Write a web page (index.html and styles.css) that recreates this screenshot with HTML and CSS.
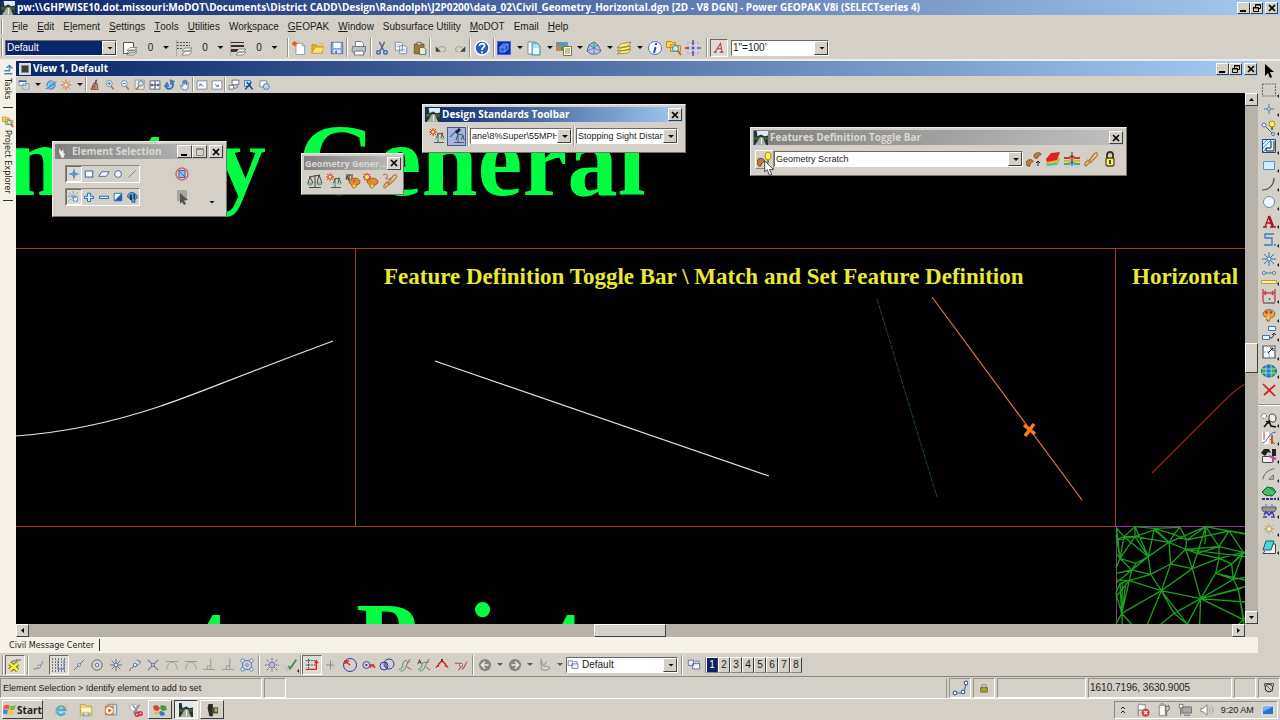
FILE: index.html
```html
<!DOCTYPE html>
<html lang="en">
<head>
<meta charset="utf-8">
<title>Power GEOPAK V8i</title>
<link rel="stylesheet" href="styles.css">
</head>
<body>
<svg class="defs" aria-hidden="true">
  <symbol id="photo" viewBox="0 0 16 16"><path fill="#24323a" d="M0 0h16v16H0z"/><path fill="#dce8f4" d="M3 0h13v5l-4 1-4-2-4 2z"/><path fill="#46602f" d="M0 7h16v3H0z"/><path fill="#a9aca4" d="M7 7h3l4 9H1z"/><path stroke="#fff" d="M8.500 8v7"/></symbol>
  <symbol id="min" viewBox="0 0 12 12"><path fill="#000" d="M2 8h6v2H2z"/></symbol>
  <symbol id="max" viewBox="0 0 12 12"><path fill="none" stroke="#8b8880" d="M2.500 2.500h7v7h-7zM2 3.500h8"/></symbol>
  <symbol id="restore" viewBox="0 0 12 12"><path fill="none" stroke="#000" d="M4.500 5V2.500h5v4H7.500M4 3h6M2.500 5.500h5v4h-5zM2 6h6"/></symbol>
  <symbol id="close" viewBox="0 0 12 12"><path stroke="#000" stroke-width="1.700" d="M3 3l6 6M9 3L3 9"/></symbol>
  <symbol id="level" viewBox="0 0 16 16"><path fill="#fff" stroke="#555" d="M1.500 2.500h10v11h-10z"/><path fill="#f4f4ef" stroke="#777" stroke-width=".8" d="M5 13l3-3h7l-3 3zM5 10.500l3-3h7l-3 3zM5 15l3-3h7l-3 3z"/></symbol>
  <symbol id="style" viewBox="0 0 16 16"><path stroke="#555" stroke-dasharray="2 1" d="M0 2.500h13M0 5.500h13M0 8.500h6"/><path fill="#f4f4ef" stroke="#777" stroke-width=".8" d="M5 11l3-3h7l-3 3zM5 15l3-4h7l-3 4z"/></symbol>
  <symbol id="weight" viewBox="0 0 16 16"><path fill="#3d3030" d="M0 2h13v1H0zM0 5h13v2H0zM0 9h8v3H0z"/><path fill="#f4f4ef" stroke="#777" stroke-width=".8" d="M5 12l3-3h7l-3 3zM5 15l3-3h7l-3 3z"/></symbol>
  <symbol id="new" viewBox="0 0 16 16"><path fill="#fff" stroke="#8490a8" d="M4.500 2.500h7l3 3v10h-10z"/><path fill="none" stroke="#8490a8" d="M11.500 2.500v3h3"/><path stroke="#e85a10" stroke-width="1.300" d="M3 0v6M0 3h6M1 1l4 4M5 1L1 5"/></symbol>
  <symbol id="open" viewBox="0 0 16 16"><path fill="#e6ab25" stroke="#b98316" stroke-width=".7" d="M1 4h5l1 2h6v8H1z"/><path fill="#ffe36b" stroke="#c8962a" stroke-width=".7" d="M1 14L5 7h10l-3 7zM9 3h4l1 3"/></symbol>
  <symbol id="save" viewBox="0 0 16 16"><path fill="#8ea5d8" stroke="#5366a3" d="M1.500 1.500h13v13h-13z"/><path fill="#fff" d="M4 2h8v6H4z"/><path fill="#e2e5ef" d="M4 10h8v4H4z"/><path fill="#546699" d="M6 11h2v3H6z"/></symbol>
  <symbol id="print" viewBox="0 0 16 16"><path fill="#fff" stroke="#77818c" d="M4.500 7V1.500h6l2 2V7"/><path fill="#bac0c8" stroke="#717a86" d="M1.500 6.500h13v5l-3 2H4l-3-2z"/><path fill="#fff" stroke="#777" d="M4 11h8l1 4H3z"/></symbol>
  <symbol id="cut" viewBox="0 0 16 16"><path fill="none" stroke="#56667c" stroke-width="1.500" d="M5 1l5 10M11 1L6 11"/><g fill="none" stroke="#315bb5" stroke-width="1.600"><circle cx="4" cy="13" r="2"/><circle cx="12" cy="13" r="2"/></g></symbol>
  <symbol id="copy" viewBox="0 0 16 16"><path fill="#fff" stroke="#70809b" d="M1.500 1.500h6l2 2v7h-8zM6.500 5.500h6l2 2v7h-8z"/><path stroke="#9aa6bd" d="M3 4.500h4M3 6.500h3M8 9.500h5M8 11.500h5"/></symbol>
  <symbol id="paste" viewBox="0 0 16 16"><path fill="#a17b37" stroke="#685020" d="M1.500 3.500h11v11h-11z"/><path fill="#d5d5d5" stroke="#666" d="M4.500 1.500h5v3h-5z"/><path fill="#e9efd7" stroke="#53654b" d="M7.500 7.500h5l2 2v6h-7z"/></symbol>
  <symbol id="undo" viewBox="0 0 16 16"><path fill="none" stroke="#aaa79f" stroke-width="1.500" d="M4 9c4-5 10-3 10 1 0 2-2 3-4 3"/><path fill="#44423e" d="M1 6v7h7z"/></symbol>
  <symbol id="redo" viewBox="0 0 16 16"><path fill="none" stroke="#aaa79f" stroke-width="1.500" d="M12 9C8 4 2 6 2 10c0 2 2 3 4 3"/><path fill="#44423e" d="M15 6v7H8z"/></symbol>
  <symbol id="help" viewBox="0 0 16 16"><circle cx="8" cy="8" r="7" fill="#2e5cb8" stroke="#fff" stroke-width="1.500"/><path fill="none" stroke="#fff" stroke-width="1.800" d="M5.500 6c0-3.500 5.500-3 5 0-.3 1.500-2.500 1.500-2.500 4M8 11.500v1.800"/></symbol>
  <symbol id="cube" viewBox="0 0 16 16"><path fill="#0b2fb0" stroke="#3c6ad8" d="M1.500 1.500h13v13h-13z"/><path fill="#2a62e0" stroke="#8ab2ff" stroke-width=".8" d="M4 7h5v5H4zM4 7l3-3h5L9 7M12 4v5l-3 3"/></symbol>
  <symbol id="doc" viewBox="0 0 16 16"><path fill="#fff" stroke="#54789a" stroke-width=".8" d="M2 2h7l2 2v10H2z"/><path fill="#a5e4ea" stroke="#3c6f8b" stroke-width=".8" d="M6 3h5l3 3v9H6z"/><path fill="#eefcff" d="M7 8h6v6H7z"/></symbol>
  <symbol id="image" viewBox="0 0 16 16"><path fill="#fff" stroke="#666" stroke-width=".7" d="M.5 2.500h11v8H.5z"/><path fill="#3fa0d8" d="M1 3h10v4H1z"/><path fill="#e07925" d="M1 6h5v4H1z"/><path fill="#3d9a47" d="M5 7h6v3H5z"/><path fill="#fffce0" stroke="#777c3d" d="M7.500 6.500h8v9h-8z"/><path stroke="#8c8c60" d="M9 9h5M9 11h5M9 13h5"/></symbol>
  <symbol id="mesh" viewBox="0 0 16 16"><path fill="#b9c5ef" stroke="#626b88" d="M1 11l2-6 5-3 4 3 3 6-4 3H5z"/><path fill="#72d5c3" d="M8 3l3 3-4 2-3-2z"/><path fill="none" stroke="#5a6389" stroke-width=".7" d="M3 5l5 3 4-3M1 11l7-3 7 3M8 8v6M8 2v6"/></symbol>
  <symbol id="layers" viewBox="0 0 16 16"><g fill="#fff07c" stroke="#87803b" stroke-width=".8"><path d="M1 14l4-3 10-2-3 4zM1 11l4-3 10-2-3 4zM1 8l4-4 10-2-3 4z"/></g></symbol>
  <symbol id="info" viewBox="0 0 16 16"><circle cx="8" cy="8" r="6.500" fill="#fff" stroke="#4c6fcb"/><path stroke="#2650bd" stroke-width="2" d="M9 3v2M8.500 7L7 13"/></symbol>
  <symbol id="find" viewBox="0 0 16 16"><path fill="#ffcf55" stroke="#c38e20" d="M.5 1.500h5l1 1h3v5h-9zM4.500 4.500h4l1 1h5v6h-10z"/><circle cx="9.500" cy="8.500" r="3" fill="#b9ecff" stroke="#3e78ab"/><path stroke="#dd5630" stroke-width="2" d="M12 11l3 4"/></symbol>
  <symbol id="grid" viewBox="0 0 16 16"><path fill="#bcb0e0" d="M2 2h12v12H2z"/><path stroke="#fff" stroke-width=".6" d="M5 2v12M11 2v12M2 5h12M2 11h12"/><path stroke="#222" d="M8 0v5M8 11v5"/><path stroke="#d32222" stroke-width="1.500" d="M0 8h4"/><path stroke="#2d9a3a" stroke-width="1.500" d="M12 8h4"/><circle cx="8" cy="8" r="1" fill="#333"/></symbol>
  <symbol id="slant" viewBox="0 0 16 16"><path fill="none" stroke="#b83c32" stroke-width="1.400" d="M3 13L10 2l2 11M5 9h6M1 13.500h4M9 13.500h5"/></symbol>
  <symbol id="windows" viewBox="0 0 16 16"><path fill="#fff" stroke="#627aa6" d="M1.500 2.500h9v6h-9zM6.500 6.500h8v7h-8z"/><path stroke="#3267b8" stroke-width="2" d="M1 3h10"/><path stroke="#8cb06e" d="M8 9h5M8 11h5"/></symbol>
  <symbol id="globe" viewBox="0 0 16 16"><circle cx="8" cy="8" r="5.500" fill="#5faee8" stroke="#286bad"/><path fill="none" stroke="#e5f9ff" d="M4 11C3 7 8 3 11 4M5 12c4 0 6-3 7-6"/><path fill="none" stroke="#1d61a8" d="M1 13C4 13 13 7 15 3"/></symbol>
  <symbol id="sun" viewBox="0 0 16 16"><path stroke="#ca442c" d="M8 1v3M8 12v3M1 8h3M12 8h3M3 3l2 2M11 11l2 2M13 3l-2 2M5 11l-2 2"/><circle cx="8" cy="8" r="3" fill="#ffe6ad" stroke="#cb4b2a"/></symbol>
  <symbol id="brush" viewBox="0 0 16 16"><path stroke="#394a75" stroke-width="2" d="M10 1L8 7"/><path fill="#c98a80" stroke="#833d37" d="M6 6h5l1 8H3z"/><path stroke="#833d37" d="M3 14L7 8M7 14l1-6"/></symbol>
  <symbol id="zoomin" viewBox="0 0 16 16"><circle cx="7" cy="6" r="4" fill="#d8f0ff" stroke="#62739e"/><path stroke="#a47c38" stroke-width="2" d="M9.500 9.500L13 14"/><path stroke="#1e55c4" d="M5 6h4M7 4v4"/></symbol>
  <symbol id="zoomout" viewBox="0 0 16 16"><circle cx="7" cy="6" r="4" fill="#e9f3fa" stroke="#62739e"/><path stroke="#a47c38" stroke-width="2" d="M9.500 9.500L13 14"/><path stroke="#1e55c4" d="M5 6h4"/></symbol>
  <symbol id="zoomrect" viewBox="0 0 16 16"><path fill="#f4f2e8" stroke="#555" d="M1.500 1.500h12v12h-12z" stroke-dasharray="2 1"/><circle cx="9" cy="6" r="3.500" fill="#c4e2f5" stroke="#586b86"/><path stroke="#a47c38" stroke-width="2" d="M7 9l-4 5"/></symbol>
  <symbol id="fit" viewBox="0 0 16 16"><path fill="#fff" stroke="#343f65" d="M1.500 2.500h13v11h-13z"/><path stroke="#343f65" stroke-width="1.400" d="M8 3v10M2 8h12M4 6v4M12 6v4"/></symbol>
  <symbol id="rotate" viewBox="0 0 16 16"><path fill="none" stroke="#2f6fb5" stroke-width="2.400" d="M3 10c0 4 6 4 8 1s1-6-1-7"/><path fill="#3586cc" stroke="#244e87" stroke-width=".6" d="M0 10l4-6 3 6zM8 1l6 2-5 5z"/></symbol>
  <symbol id="hand" viewBox="0 0 16 16"><path fill="#eaf4ff" stroke="#3d68a7" d="M5 14L1.500 9l1-1L5 10V3h1.500v4V1.500H8V7V2h2v6V4h2v7l-2 4z"/></symbol>
  <symbol id="prev" viewBox="0 0 16 16"><path fill="#fff" stroke="#69738e" d="M1.500 2.500h13v11h-13z"/><path fill="none" stroke="#2a64ad" d="M10 10L5 7M5 10V7h3"/></symbol>
  <symbol id="next" viewBox="0 0 16 16"><path fill="#fff" stroke="#69738e" d="M1.500 2.500h13v11h-13z"/><path fill="none" stroke="#2a64ad" d="M5 7l5 3M10 7v3H7"/></symbol>
  <symbol id="copyview" viewBox="0 0 16 16"><path fill="#fff" stroke="#445878" d="M5.500 1.500h9v6h-9zM1.500 8.500h6v5h-6zM8 12h4V8"/></symbol>
  <symbol id="clip" viewBox="0 0 16 16"><path fill="#c7e1ff" stroke="#2d64ad" d="M2 2h8v8H2z"/><path stroke="#234d93" stroke-width="2" d="M3 14L11 4M5 4l8 10"/></symbol>
  <symbol id="mask" viewBox="0 0 16 16"><path fill="#fff" stroke="#60708d" d="M2.500 2.500h9v8h-9z"/><circle cx="11" cy="10" r="4" fill="#bcd6f2" stroke="#356099"/></symbol>
  <symbol id="task" viewBox="0 0 16 16"><path fill="none" stroke="#4e87c8" stroke-width="2" d="M3 13h11M3 9h7V3M6 5l4-3 4 4"/></symbol>
  <symbol id="pointer" viewBox="0 0 16 16"><path fill="#000" d="M4 1v12l3-3 2 5 2-1-2-5h4z"/></symbol>
  <symbol id="fence" viewBox="0 0 16 16"><path fill="none" stroke="#746e68" stroke-dasharray="2 1" stroke-width="1.200" d="M1.500 2h13v12h-13z"/></symbol>
  <symbol id="cross" viewBox="0 0 16 16"><path stroke="#4d7cb4" d="M8 3v10M3 8h10"/><circle cx="8" cy="8" r="1.500" fill="#fff" stroke="#4d7cb4"/></symbol>
  <symbol id="linebulb" viewBox="0 0 16 16"><path stroke="#586579" d="M3 5l9 9"/><circle cx="3" cy="5" r="2" fill="#e5f2ff" stroke="#466fae"/><circle cx="12" cy="14" r="1.500" fill="#e5f2ff" stroke="#466fae"/><circle cx="11" cy="4" r="3" fill="#ffe94d" stroke="#a48d17"/><path fill="#767136" d="M10 7h2v3h-2z"/></symbol>
  <symbol id="pattern" viewBox="0 0 16 16"><path fill="#d8efff" stroke="#294a74" d="M1.500 1.500h13v13h-13z"/><path stroke="#4197d4" d="M2 6l4-4M2 10l8-8M2 14l4-4"/><path fill="none" stroke="#222" d="M13 3v10H5v-3h5V3"/></symbol>
  <symbol id="rect" viewBox="0 0 16 16"><path fill="#d3eaff" stroke="#5b92cb" d="M2.500 4.500h11v8h-11z"/></symbol>
  <symbol id="arc" viewBox="0 0 16 16"><path fill="none" stroke="#4b4b4b" stroke-width="1.200" d="M1 14c7 0 12-5 12-12"/></symbol>
  <symbol id="circle" viewBox="0 0 16 16"><circle cx="8" cy="8" r="5.500" fill="#f6fbff" stroke="#5f86cc"/></symbol>
  <symbol id="texta" viewBox="0 0 16 16"><path fill="none" stroke="#a81824" stroke-width="2.600" d="M8 3l4 11"/><path fill="none" stroke="#a81824" stroke-width="1.300" d="M8 3L4 14M5 10h6M2 14h4M9 14h6"/></symbol>
  <symbol id="spath" viewBox="0 0 16 16"><path fill="none" stroke="#3d78c0" stroke-width="1.300" d="M13 2H4v4h7v7H3M13 13h2"/></symbol>
  <symbol id="star" viewBox="0 0 16 16"><path stroke="#3575ba" d="M8 1v14M1 8h14M3 3l10 10M13 3L3 13"/><circle cx="8" cy="8" r="2" fill="#e8f7ff" stroke="#3575ba"/></symbol>
  <symbol id="measure" viewBox="0 0 16 16"><path stroke="#4972a8" d="M2 4h12"/><circle cx="3" cy="4" r="1.500" fill="#fff" stroke="#4972a8"/><circle cx="13" cy="4" r="1.500" fill="#fff" stroke="#4972a8"/><path fill="#fff09b" stroke="#b69c3d" d="M.5 11.500h15v3H.5z"/></symbol>
  <symbol id="dim" viewBox="0 0 16 16"><path stroke="#c34550" stroke-width="1.400" d="M2 1v13M14 1v13M3 5h10M3 5l2-2M3 5l2 2M13 5l-2-2M13 5l-2 2"/><path stroke="#333" d="M2 15h12M8 10l1 2"/></symbol>
  <symbol id="palette" viewBox="0 0 16 16"><path fill="#e9a141" stroke="#97511c" d="M2 9C-1 5 5 1 10 2s6 6 3 8-4 0-4 3-4 3-4-1-2-1-3-3z"/><circle cx="5" cy="5" r="1.500" fill="#cb332b"/><circle cx="10" cy="5" r="1.500" fill="#3b67bb"/><circle cx="7" cy="11" r="2" fill="#e3d941"/></symbol>
  <symbol id="move" viewBox="0 0 16 16"><path fill="#e7f4ff" stroke="#3f74af" d="M7.500 1.500h7v4h-7zM1.500 10.500h7v4h-7z"/><path fill="none" stroke="#333" d="M9 13c3 0 4-2 4-5M11 10l2-2 2 2"/></symbol>
  <symbol id="modify" viewBox="0 0 16 16"><path fill="#f6f8fb" stroke="#53575e" stroke-width="1.200" d="M2 2h12v12H2z"/><path fill="none" stroke="#5a9ad4" stroke-dasharray="2 1" d="M3 8h5v6"/><path fill="none" stroke="#222" d="M7 9l5-5M9 4h3v3"/></symbol>
  <symbol id="world" viewBox="0 0 16 16"><ellipse cx="8" cy="8" rx="7.500" ry="6" fill="#2878ce" stroke="#1d7049"/><path fill="#35ae52" d="M1 5h4v6H1zM10 3l4 2v7l-4 1z"/><path fill="none" stroke="#bfeaf5" stroke-width=".7" d="M5 2v12M10 2v12M1 6h14M1 10h14"/></symbol>
  <symbol id="delete" viewBox="0 0 16 16"><path stroke="#ce2020" stroke-width="1.700" d="M2 2l12 12M14 3L3 13"/></symbol>
  <symbol id="survey" viewBox="0 0 16 16"><circle cx="3" cy="4" r="2.500" fill="#fff" stroke="#444" stroke-dasharray="1 1"/><path fill="#eee" stroke="#333" d="M8 5c0-4 7-4 7 1s-4 5-7 2z"/><path fill="none" stroke="#111" stroke-width="1.500" d="M3 15l5-6 2 5 5 1M5 9l4 3"/></symbol>
  <symbol id="profile" viewBox="0 0 16 16"><path fill="#fff" d="M1 2h7v12H1z"/><path fill="none" stroke="#4863b6" d="M1 13c6 0 5-10 14-11"/><path stroke="#a06a31" stroke-width="2" d="M11 5v9"/><path stroke="#bd3e3e" d="M3 2v8M9 9l5 5"/></symbol>
  <symbol id="hammer" viewBox="0 0 16 16"><path fill="#eee" stroke="#4b4b4b" d="M1.500 8.500h10v6h-10z"/><path fill="#202020" d="M0 5l3-4h5l2 4-3-1-3 4zM11 1h4v7h-4z"/><path stroke="#ad4e8f" stroke-width="2" d="M8 8l7 3M12 8v6"/></symbol>
  <symbol id="angle" viewBox="0 0 16 16"><path fill="none" stroke="#555" d="M1 14C2 7 8 3 14 2M8 14l5-5v5z"/></symbol>
  <symbol id="terrain" viewBox="0 0 16 16"><path fill="#25a84c" stroke="#175d2d" d="M1 7l5-5 6 1 3 4-4 4-7-1z"/><path stroke="#6be484" d="M4 5l8 4M6 3l7 5M3 7l6 3"/><path stroke="#2b369d" stroke-width="2" stroke-dasharray="3 1" d="M1 14h14"/></symbol>
  <symbol id="bridge" viewBox="0 0 16 16"><path fill="#999" stroke="#555" d="M1 4h14v3l-2 2H3L1 7z"/><path stroke="#666" d="M4 2h2M10 2h2"/><path fill="none" stroke="#393eac" stroke-width="1.600" d="M3 12l2-3 3 3 3-3 2 4M2 14h4M10 14h4"/></symbol>
  <symbol id="spark" viewBox="0 0 16 16"><path stroke="#97903d" d="M8 1v14M1 8h14M3 3l10 10M13 3L3 13"/><circle cx="8" cy="8" r="3" fill="#fffbb5" stroke="#ad9a31"/></symbol>
  <symbol id="sheet" viewBox="0 0 16 16"><path fill="#eee" stroke="#444" d="M6 5h8.500v9.500H2L4 12"/><path fill="#4ed6de" stroke="#155e6e" d="M5 2h8l-3 9H2z"/></symbol>
  <symbol id="cursor" viewBox="0 0 16 20"><path fill="#fff" stroke="#222" d="M2 1v14l3-3 3 7 3-1-3-6h5z"/></symbol>
  <symbol id="scale" viewBox="0 0 16 16"><path fill="none" stroke="#474b45" d="M8 2v12M2 14.500h12M2 4l11-2M3 4L1 10M3 4l3 6M12 2l-2 8M12 2l3 8"/><path fill="#98ccb2" stroke="#4a7661" stroke-width=".7" d="M.5 10h5l-1 2h-3zM10 10h5l-1 2h-3z"/></symbol>
  <symbol id="sunscale" viewBox="0 0 16 16"><path stroke="#e03822" d="M4 0v8M0 4h8M1 1l6 6M7 1L1 7"/><circle cx="4" cy="4" r="2" fill="#fff06e" stroke="#dc4221"/><path fill="none" stroke="#4b6258" d="M9 5v9M5 14.500h10M8 6l6-1M7 11l2-5M12 11l1-6 2 6"/><path fill="#91cbb0" d="M6 10h3v2H6zM12 10h3v2h-3z"/></symbol>
  <symbol id="setscale" viewBox="0 0 16 16"><path stroke="#3480cd" stroke-width="1.600" d="M1 9l7-7"/><path stroke="#172236" stroke-width="3" d="M7 5l4-4"/><path fill="none" stroke="#415a76" d="M9 5v9M5 14.500h10M8 6l6 1M7 12l2-6M12 12l2-5 1 5"/></symbol>
  <symbol id="scalepal" viewBox="0 0 16 16"><path fill="none" stroke="#353535" d="M1 2h7M4 2v6M2 3L1 6h3zM7 3v4"/><path fill="#df8b30" stroke="#a5581d" d="M5 7c3-3 10-2 10 2 0 3-4 2-4 4s-4 3-4 0-5-2-2-6z"/><circle cx="9" cy="8" r="1" fill="#ca3d26"/><circle cx="9" cy="13" r="1.500" fill="#e6da43"/></symbol>
  <symbol id="sunpal" viewBox="0 0 16 16"><path fill="#df8b30" stroke="#a5581d" d="M5 7c3-3 10-2 10 2 0 3-4 2-4 4s-4 3-4 0-5-2-2-6z"/><circle cx="9" cy="13" r="1.500" fill="#e6da43"/><path stroke="#e03822" stroke-width="1.300" d="M4 0v8M0 4h8M1 1l6 6M7 1L1 7"/><circle cx="4" cy="4" r="2" fill="#ffed75"/></symbol>
  <symbol id="chain" viewBox="0 0 16 16"><path fill="none" stroke="#bc7b29" stroke-width="1.300" d="M3 15c-3-1 0-4 2-6l2 2zM6 10l5-7c3-3 5 0 2 3l-6 6"/></symbol>
  <symbol id="redchain" viewBox="0 0 16 16"><path fill="none" stroke="#bc7b29" stroke-width="1.300" d="M3 15c-3-1 0-4 2-6l2 2zM6 10l5-7c3-3 5 0 2 3l-6 6"/><path fill="none" stroke="#cf4f42" d="M1 2c3-2 5 0 4 2S2 6 9 6"/></symbol>
  <symbol id="palbulb" viewBox="0 0 16 16"><ellipse cx="11" cy="5" rx="3" ry="4" fill="#fff144" stroke="#9b922a"/><path fill="#8a8134" d="M10 9h2v3h-2z"/><path fill="#c47937" stroke="#62432a" d="M0 10c1-4 8-3 7 0s-3 1-3 4-4 1-4-4z"/></symbol>
  <symbol id="palpal" viewBox="0 0 16 16"><path fill="#c47b37" stroke="#674522" stroke-width=".8" d="M0 12c0-4 7-4 7-2s-3 1-3 4-4 1-4-2zM8 5c0-4 7-4 7-2s-3 1-3 3-4 2-4-1z"/><path fill="none" stroke="#222" d="M12 15v-5M10 12l2-2 2 2"/></symbol>
  <symbol id="books" viewBox="0 0 16 16"><path fill="#48bdb2" d="M1 12l4-3 10-1-3 6-10 1z"/><path fill="#e6ba31" d="M1 10l4-3 10-1-3 6-10 1z"/><path fill="#e32323" d="M1 8l5-6 9-1-3 8-10 2z"/></symbol>
  <symbol id="section" viewBox="0 0 16 16"><path fill="none" stroke="#35aaa6" stroke-width="2" d="M0 13h5l3-2 3 2h5"/><path fill="none" stroke="#e3b52d" stroke-width="2" d="M0 10h5l3-2 3 2h5"/><path fill="none" stroke="#d43728" stroke-width="2" d="M0 7h5l3-2 3 2h5"/><path stroke="#303d73" d="M8 1v14"/></symbol>
  <symbol id="lock" viewBox="0 0 16 16"><path fill="none" stroke="#35331a" stroke-width="1.800" d="M5 8V4c0-4 6-4 6 0v4"/><rect x="4" y="7" width="8" height="8" rx="2" fill="#fff25b" stroke="#50481a" stroke-width="1.300"/><path stroke="#222" stroke-width="1.600" d="M8 9v4"/></symbol>
  <symbol id="smalllock" viewBox="0 0 16 16"><path fill="none" stroke="#625d3b" d="M5 8V5c0-2 6-2 6 0v3"/><path fill="#a89d38" stroke="#686225" d="M3.500 7.500h9v6h-9z"/></symbol>
  <symbol id="target" viewBox="0 0 16 16"><path fill="#92caed" stroke="#4b8eca" d="M8 4l4 4-4 4-4-4z"/><path stroke="#2769a8" d="M8 1v14M1 8h14"/></symbol>
  <symbol id="smallrect" viewBox="0 0 16 16"><path fill="#fff" stroke="#326cae" stroke-width="1.400" d="M3 4h10v8H3z"/></symbol>
  <symbol id="para" viewBox="0 0 16 16"><path fill="#fff" stroke="#326cae" stroke-width="1.300" d="M5 5h10l-4 6H1z"/></symbol>
  <symbol id="smallcircle" viewBox="0 0 16 16"><circle cx="8" cy="8" r="4.500" fill="#fff" stroke="#326cae" stroke-width="1.300"/></symbol>
  <symbol id="diag" viewBox="0 0 16 16"><path stroke="#777b87" stroke-width="1.200" d="M3 13L13 3"/></symbol>
  <symbol id="starhand" viewBox="0 0 16 16"><path stroke="#4c82b6" stroke-dasharray="3 1" d="M7 0v14M1 2l12 12M13 2L1 14M0 7h14"/><circle cx="10" cy="11" r="3" fill="#e2f2ff" stroke="#4574aa"/></symbol>
  <symbol id="plus" viewBox="0 0 16 16"><path fill="#e0f3ff" stroke="#286db3" stroke-width="1.300" d="M6 3h4v4h4v3h-4v4H6v-4H2V7h4z"/></symbol>
  <symbol id="minus" viewBox="0 0 16 16"><path fill="#e0f3ff" stroke="#286db3" stroke-width="1.300" d="M2 7h12v3H2z"/></symbol>
  <symbol id="invert" viewBox="0 0 16 16"><path fill="#f7fbff" stroke="#286db3" stroke-width="1.300" d="M3 3h10v10H3z"/><path fill="#1b62af" d="M3 13L13 3v10z"/></symbol>
  <symbol id="people" viewBox="0 0 16 16"><path fill="#53a5dc" stroke="#1d4d80" d="M2 8c0-9 13-7 13 1l-3 3v3H8l-1-4z"/><path fill="#1d3652" d="M5 5h3v7H5zM10 4h2v7h-2z"/></symbol>
  <symbol id="stop" viewBox="0 0 16 16"><path fill="#9eb9e3" stroke="#3c66ad" d="M5 4.500h6v7H5z"/><circle cx="8" cy="8" r="6" fill="none" stroke="#d16868" stroke-width="1.500"/><path stroke="#3c66ad" d="M5 5l6 6"/></symbol>
  <symbol id="graypoint" viewBox="0 0 16 16"><path fill="#a5a79b" d="M3 1h10v11H3z"/><path fill="#55554f" d="M6 4v11l2-2 2 3 2-1-2-4h4z"/></symbol>
  <symbol id="torch" viewBox="0 0 16 16"><path fill="#f0f0ec" stroke="#626262" stroke-width=".7" d="M4 1l2 6 3-3v5h2l-2 6H6L3 8z"/></symbol>
  <symbol id="yellowx" viewBox="0 0 16 16"><path stroke="#8a8d91" stroke-width="2" d="M4 4l11-2M10 1v9"/><path stroke="#6b6822" stroke-width="5" d="M2 6l9 8M11 6l-9 8"/><path stroke="#fff22f" stroke-width="3" d="M2 6l9 8M11 6l-9 8"/></symbol>
  <symbol id="near" viewBox="0 0 16 16"><path fill="none" stroke="#666" d="M1 13c6 1 9-2 12-10"/><circle cx="8" cy="10" r="2" fill="#d8e6ff" stroke="#5b77c4"/></symbol>
  <symbol id="dotgrid" viewBox="0 0 16 16"><path stroke="#565656" stroke-width="1.500" stroke-dasharray="1 2" d="M1 2h14M1 5h14M1 8h14M1 11h14M1 14h14"/><path stroke="#5775be" d="M7 3v10M13 3v10M7 12h6"/></symbol>
  <symbol id="mid" viewBox="0 0 16 16"><path stroke="#555" d="M1 15L15 1"/><circle cx="8" cy="8" r="2" fill="#dce9ff" stroke="#4971c2"/></symbol>
  <symbol id="center" viewBox="0 0 16 16"><circle cx="8" cy="8" r="6" fill="none" stroke="#666"/><circle cx="8" cy="8" r="2" fill="#dce9ff" stroke="#4971c2"/></symbol>
  <symbol id="origin" viewBox="0 0 16 16"><path stroke="#666" d="M8 1v14M1 8h14M3 3l10 10M13 3L3 13"/><circle cx="8" cy="8" r="2" fill="#dce9ff" stroke="#4971c2"/></symbol>
  <symbol id="bisect" viewBox="0 0 16 16"><path fill="none" stroke="#666" d="M2 15c0-7 12-4 12-11L10 2"/><circle cx="8" cy="8" r="2" fill="#dce9ff" stroke="#4971c2"/></symbol>
  <symbol id="intersect" viewBox="0 0 16 16"><path stroke="#666" stroke-width="1.200" d="M2 2l12 12M14 2L2 14"/><circle cx="8" cy="8" r="1.700" fill="#dce9ff" stroke="#4971c2"/></symbol>
  <symbol id="tangent" viewBox="0 0 16 16"><path fill="none" stroke="#96938c" d="M1 4h14M2 13c1-11 11-11 12 0"/></symbol>
  <symbol id="perp" viewBox="0 0 16 16"><path fill="none" stroke="#96938c" d="M1 13h14M10 1v12M6 13V9h4"/></symbol>
  <symbol id="box" viewBox="0 0 16 16"><path fill="none" stroke="#4e6da6" d="M3 3h10v10H3z"/><g fill="#eef5ff" stroke="#4e76c5"><circle cx="3" cy="3" r="2"/><circle cx="13" cy="3" r="2"/><circle cx="3" cy="13" r="2"/><circle cx="13" cy="13" r="2"/><circle cx="8" cy="8" r="1.500"/></g></symbol>
  <symbol id="violet" viewBox="0 0 16 16"><path stroke="#555" stroke-dasharray="2 1" d="M8 0v16M0 8h16M2 2l12 12M14 2L2 14"/><circle cx="8" cy="8" r="3" fill="#c5b5ef" stroke="#8b72d0"/></symbol>
  <symbol id="check" viewBox="0 0 16 16"><path fill="none" stroke="#aaa" d="M1 10l3 4L11 8"/><path fill="none" stroke="#41884a" stroke-width="2" d="M5 9l2 3 7-10"/></symbol>
  <symbol id="redgrid" viewBox="0 0 16 16"><path stroke="#333" stroke-dasharray="2 1" d="M1 3h12M4 1v12M1 8h12"/><path fill="none" stroke="#e0201c" stroke-width="1.500" d="M1 13h12M13 13V4M11 6l2-3 2 3"/></symbol>
  <symbol id="axes" viewBox="0 0 16 16"><path stroke="#777" d="M6 2v12M0 8h11M9 5h1M9 11h1"/></symbol>
  <symbol id="bluecircle" viewBox="0 0 16 16"><circle cx="8" cy="8" r="6.500" fill="none" stroke="#2f37be"/><path fill="none" stroke="#df201c" stroke-width="1.500" d="M3 4l5 4M3 7V4h4"/></symbol>
  <symbol id="smallarc" viewBox="0 0 16 16"><circle cx="5" cy="8" r="4" fill="none" stroke="#2f37be"/><path fill="#303030" d="M4 7h2v2H4z"/><path fill="none" stroke="#df201c" stroke-width="1.500" d="M15 11l-4-3M10 11V8h4"/></symbol>
  <symbol id="twocircles" viewBox="0 0 16 16"><g fill="none" stroke="#2f37be"><circle cx="5" cy="9" r="4"/><circle cx="10" cy="7" r="5"/></g><path stroke="#333" d="M7 5v6"/></symbol>
  <symbol id="greencurve" viewBox="0 0 16 16"><path fill="none" stroke="#3c8a47" d="M1 13c7 0 2-11 9-10M3 15c7 0 5-9 11-11"/><path stroke="#b53a31" d="M10 10l5 3M14 1l-4 5"/></symbol>
  <symbol id="notecurve" viewBox="0 0 16 16"><path fill="none" stroke="#333" d="M1 7l2-5 2 5M2 5h2"/><path fill="none" stroke="#3c8a47" d="M1 13c7 0 2-9 9-8M3 15c7 0 5-9 11-11"/><path stroke="#b53a31" d="M10 10l5 4M14 1l-4 5"/></symbol>
  <symbol id="redangle" viewBox="0 0 16 16"><path fill="none" stroke="#df201c" stroke-width="1.500" d="M1 11l6-7h2l6 7M4 6v4M12 6v4"/><path fill="#333" d="M7 1h2v3H7z"/></symbol>
  <symbol id="knot" viewBox="0 0 16 16"><path fill="none" stroke="#b34b46" stroke-width="1.200" d="M1 6h6l2 3-4 5M9 13c3-1 4-7 6-9"/><circle cx="8" cy="8" r="2" fill="#ded6d1" stroke="#8a6a66"/></symbol>
  <symbol id="back" viewBox="0 0 16 16"><circle cx="8" cy="8" r="7" fill="#88867f"/><path fill="none" stroke="#efede7" stroke-width="1.800" d="M12 8H4M8 4L4 8l4 4"/></symbol>
  <symbol id="forward" viewBox="0 0 16 16"><circle cx="8" cy="8" r="7" fill="#88867f"/><path fill="none" stroke="#efede7" stroke-width="1.800" d="M4 8h8M8 4l4 4-4 4"/></symbol>
  <symbol id="seat" viewBox="0 0 16 16"><path fill="none" stroke="#9c9992" stroke-width="1.200" d="M3 1l3 8 6 1c5 3-5 5-8 3L3 1M6 9l4-5"/></symbol>
  <symbol id="models" viewBox="0 0 16 16"><path fill="#f9f9ff" stroke="#55629c" d="M1.500 2.500h6v6h-6zM6.500 6.500h8v6h-8zM9.500 3.500h4v3"/></symbol>
  <symbol id="snap" viewBox="0 0 16 16"><path fill="none" stroke="#666" d="M3 13h9L14 3"/><g fill="#fff" stroke="#3a69bb" stroke-width="1.200"><circle cx="3" cy="13" r="1.800"/><circle cx="11" cy="12" r="1.800"/><circle cx="14" cy="3" r="1.800"/></g></symbol>
  <symbol id="none" viewBox="0 0 16 16"><circle cx="8" cy="8" r="5" fill="none" stroke="#333" stroke-width="1.400"/><path fill="none" stroke="#555" stroke-width="1.200" d="M3 3l10 10M2 6V2h12v4"/></symbol>
  <symbol id="flag" viewBox="0 0 16 16"><path fill="#e45c2e" d="M1 4c2-3 5-2 7-1L7 8C5 7 3 6 0 8z"/><path fill="#77b83e" d="M9 3c2 1 4 1 7-1l-2 6c-2 1-4 1-6 0z"/><path fill="#3c8bd0" d="M0 9c2-2 4-1 6 0l-1 5c-2-1-4-1-6 0z"/><path fill="#f5c53a" d="M7 9c2 1 4 1 6 0l-1 5c-2 2-4 1-6 0z"/></symbol>
  <symbol id="ie" viewBox="0 0 16 16"><path fill="none" stroke="#4aa9dc" stroke-width="2.600" d="M12.500 11A5 5 0 1 1 13 8H4"/><path fill="none" stroke="#e6bd3c" d="M2 14C-1 12 8 2 14 2c2 1 0 4-1 5"/></symbol>
  <symbol id="folder" viewBox="0 0 16 16"><path fill="#f3d676" stroke="#bd9942" d="M1.500 1.500h5l1 2h7v11h-13z"/><path fill="#fff6c2" d="M3 6h11v4H3z"/><path fill="#66a9dc" d="M4 11h8v4H4z"/><path fill="#f5db82" d="M6 11h4v3H6z"/></symbol>
  <symbol id="media" viewBox="0 0 16 16"><path fill="#c9dff1" stroke="#6489b2" d="M4.500 1.500h10v12h-10z"/><path fill="#e87d26" d="M1 3h10v11H1z"/><circle cx="6" cy="8.500" r="4" fill="#fff"/><path fill="#dc5f18" d="M5 6l4 2.500L5 11z"/></symbol>
  <symbol id="snip" viewBox="0 0 16 16"><circle cx="5" cy="5" r="4" fill="#fff" stroke="#a6a4b0"/><path stroke="#888b99" stroke-width="1.600" d="M4 2l8 11M12 2L5 12"/><g fill="none" stroke="#d3364b" stroke-width="1.800"><circle cx="13" cy="12" r="2"/><circle cx="9" cy="13" r="2"/></g></symbol>
  <symbol id="logo" viewBox="0 0 16 16"><path fill="#d6402d" d="M1 4l4-1 3 3-2 3-4-1z"/><path fill="#429a45" d="M9 3l5 1 1 4-5 1-2-3z"/><path fill="#367abe" d="M8 9l4 1 1 3-4 1-2-3z"/><path fill="#ebb83b" d="M3 9l4 1-1 3-4-1z"/></symbol>
  <symbol id="camcorder" viewBox="0 0 16 16"><path fill="#292b24" d="M4 1h5v14H5L3 6z"/><path fill="#4c512e" d="M8 5h7v7H8z"/><path fill="#abb571" d="M11 6h3v4h-3z"/></symbol>
  <symbol id="action" viewBox="0 0 16 16"><path fill="#fff" stroke="#777" d="M2.500 15V1.500c3-1 5 2 8 0v7c-3 1-5-2-8 0"/><circle cx="11" cy="11" r="4.500" fill="#d63931"/><path stroke="#fff" stroke-width="1.500" d="M9 9l4 4M13 9l-4 4"/></symbol>
  <symbol id="battery" viewBox="0 0 16 16"><path fill="#f8f8f5" stroke="#777" d="M2.500 2.500h7v12h-7zM4 1h4"/><path fill="none" stroke="#777" stroke-width="1.300" d="M11 15v-6M9 4h5v3l-2 2h-2V4M10 2v2M13 2v2"/></symbol>
  <symbol id="network" viewBox="0 0 16 16"><path fill="#a5a8aa" stroke="#666" d="M4.500 4.500h11v7h-11zM7 14h7"/><path fill="#fff" stroke="#666" d="M1.500 1.500h4v4h-4zM3 6v8"/></symbol>
  <symbol id="volume" viewBox="0 0 16 16"><path fill="#fff" stroke="#777" d="M1 6h3l4-4v12l-4-4H1z"/><path fill="none" stroke="#999" d="M10 5c2 2 2 4 0 6M12 3c4 3 4 7 0 10"/></symbol>
  <symbol id="desktop" viewBox="0 0 16 16"><path fill="#2d70cb" stroke="#fff" d="M1.500 3.500h13v10h-13z"/><path fill="#7baff2" d="M2 4h12L2 10z"/></symbol>
</svg>

<header class="caption main-caption">
  <svg class="ic"><use href="#photo"/></svg>
  <h1>pw:\\GHPWISE10.dot.missouri:MoDOT\Documents\District CADD\Design\Randolph\J2P0200\data_02\Civil_Geometry_Horizontal.dgn [2D - V8 DGN] - Power GEOPAK V8i (SELECTseries 4)</h1>
  <span class="winbtns"><button aria-label="Minimize"><svg><use href="#min"/></svg></button><button aria-label="Restore"><svg><use href="#restore"/></svg></button><button class="x" aria-label="Close"><svg><use href="#close"/></svg></button></span>
</header>

<nav class="menubar" aria-label="Main menu">
  <i class="grip"></i>
  <button><u>F</u>ile</button><button><u>E</u>dit</button><button>E<u>l</u>ement</button><button><u>S</u>ettings</button><button><u>T</u>ools</button><button><u>U</u>tilities</button><button>Wor<u>k</u>space</button><button><u>G</u>EOPAK</button><button><u>W</u>indow</button><button>Subsurface Utility</button><button><u>M</u>oDOT</button><button>Email</button><button><u>H</u>elp</button>
</nav>

<div class="toolbar" role="toolbar" aria-label="Standard">
  <i class="grip"></i>
  <span class="combo navy level-combo"><select aria-label="Active level"><option>Default</option></select></span>
  <div class="attrs">
    <button class="attr"><svg class="ic"><use href="#level"/></svg><span>0</span><i class="caret"></i></button>
    <button class="attr"><svg class="ic"><use href="#style"/></svg><span>0</span><i class="caret"></i></button>
    <button class="attr"><svg class="ic"><use href="#weight"/></svg><span>0</span><i class="caret"></i></button>
  </div>
  <i class="sep"></i>
  <div class="group c19"><button aria-label="New"><svg class="ic s14"><use href="#new"/></svg></button><button aria-label="Open"><svg class="ic s14"><use href="#open"/></svg></button><button aria-label="Save"><svg class="ic s14"><use href="#save"/></svg></button></div>
  <i class="sep"></i>
  <div class="group c22"><button aria-label="Print"><svg class="ic"><use href="#print"/></svg></button></div>
  <i class="sep"></i>
  <div class="group c19"><button aria-label="Cut"><svg class="ic s14"><use href="#cut"/></svg></button><button aria-label="Copy"><svg class="ic s14"><use href="#copy"/></svg></button><button aria-label="Paste"><svg class="ic s14"><use href="#paste"/></svg></button></div>
  <i class="sep"></i>
  <div class="group c19"><button aria-label="Undo"><svg class="ic s12"><use href="#undo"/></svg></button><button aria-label="Redo"><svg class="ic s12"><use href="#redo"/></svg></button></div>
  <i class="sep"></i>
  <div class="group c22"><button aria-label="Help"><svg class="ic"><use href="#help"/></svg></button></div>
  <i class="sep"></i>
  <div class="group drops">
    <button aria-label="Models"><svg class="ic"><use href="#cube"/></svg><i class="caret"></i></button>
    <button aria-label="References"><svg class="ic"><use href="#doc"/></svg><i class="caret"></i></button>
    <button aria-label="Raster"><svg class="ic"><use href="#image"/></svg><i class="caret"></i></button>
    <button aria-label="Point clouds"><svg class="ic"><use href="#mesh"/></svg><i class="caret"></i></button>
    <button aria-label="Levels"><svg class="ic"><use href="#layers"/></svg><i class="caret"></i></button>
  </div>
  <div class="group c19"><button aria-label="Information"><svg class="ic"><use href="#info"/></svg></button><button aria-label="Search"><svg class="ic"><use href="#find"/></svg></button><button aria-label="AccuDraw"><svg class="ic"><use href="#grid"/></svg></button></div>
  <i class="sep wide"></i>
  <div class="group c18"><button class="down" aria-label="Annotation scale"><svg class="ic s12"><use href="#slant"/></svg></button></div>
  <span class="combo scale-combo"><select aria-label="Drawing scale"><option>1"=100'</option></select></span>
</div>

<main class="middle">
  <div class="work">
    <aside class="dock">
      <svg class="ic s12"><use href="#task"/></svg><button>Tasks</button><i class="bar"></i>
      <svg class="ic s12"><use href="#find"/></svg><button>Project Explorer</button><i class="bar"></i>
    </aside>
    <section class="view">
      <header class="caption view-caption">
        <svg class="viewicon" viewBox="0 0 14 14"><path fill="#dcdcd4" d="M1 1h12v12H1z"/><path fill="#3c3c3c" stroke="#888" d="M3.500 3.500h7v7h-7z"/></svg>
        <h2>View 1, Default</h2>
        <span class="winbtns"><button aria-label="Minimize view"><svg><use href="#min"/></svg></button><button aria-label="Restore view"><svg><use href="#restore"/></svg></button><button class="x" aria-label="Close view"><svg><use href="#close"/></svg></button></span>
      </header>
      <div class="viewbar" role="toolbar" aria-label="View control">
        <button aria-label="View attributes"><svg class="ic s12"><use href="#windows"/></svg></button><i class="caret"></i>
        <button aria-label="Display style"><svg class="ic s12"><use href="#globe"/></svg></button><button aria-label="Brightness"><svg class="ic s12"><use href="#sun"/></svg></button><i class="caret"></i>
        <i class="sep"></i>
        <button aria-label="Update view"><svg class="ic s12"><use href="#brush"/></svg></button><button aria-label="Zoom in"><svg class="ic s12"><use href="#zoomin"/></svg></button><button aria-label="Zoom out"><svg class="ic s12"><use href="#zoomout"/></svg></button><button aria-label="Window area"><svg class="ic s12"><use href="#zoomrect"/></svg></button><button aria-label="Fit view"><svg class="ic s12"><use href="#fit"/></svg></button><button aria-label="Rotate view"><svg class="ic s12"><use href="#rotate"/></svg></button><button aria-label="Pan view"><svg class="ic s12"><use href="#hand"/></svg></button>
        <i class="sep"></i>
        <button aria-label="View previous"><svg class="ic s12"><use href="#prev"/></svg></button><button aria-label="View next"><svg class="ic s12"><use href="#next"/></svg></button>
        <i class="sep"></i>
        <button aria-label="Copy view"><svg class="ic s12"><use href="#copyview"/></svg></button><button aria-label="Clip volume"><svg class="ic s12"><use href="#clip"/></svg></button><button aria-label="Clip mask"><svg class="ic s12"><use href="#mask"/></svg></button>
      </div>
      <div class="canvas-row">
        <div class="canvas">
          <svg class="drawing" viewBox="16 93 1229 531" preserveAspectRatio="xMinYMin slice">
            <g class="headline">
              <text x="266" y="195" text-anchor="end">Geometry</text><text x="298" y="195">General</text>
              <text x="327" y="673" text-anchor="end">Geometry</text><text x="356" y="673">Points</text>
            </g>
            <g class="cells"><path d="M16 248h1229v1H16zM16 526h1100v1H16zM355 248h1v278h-1zM1115 248h1v278h-1z"/></g>
            <g class="note"><text x="384" y="284">Feature Definition Toggle Bar \ Match and Set Feature Definition</text><text x="1132" y="284">Horizontal</text></g>
            <g fill="none">
              <path stroke="#e4e4e4" stroke-width="1.200" d="M16 436C70 432 116 421 158 407S225 381 333 341M435 361l334 115"/>
              <path stroke="#1d4d1d" stroke-dasharray="5 1" d="M877 299l60 198"/>
              <path stroke="#e27a3c" stroke-width="1.200" d="M932 297l150 203"/>
              <path stroke="#ff7a26" stroke-width="3.500" d="M1024 425l11 9M1034 424l-9 12"/>
              <path stroke="#9a1f1f" stroke-width="1.300" d="M1152 473l73-73q10-10 20-16"/>
              <path stroke="#93309b" d="M1116 526.500h129M1116.500 526v98"/>
              <path class="tin" transform="translate(1100 340) scale(.3333)" d="M50 565L72 590 105 560 163 565 222 583 207 607 163 565 145 650 105 560 105 590 72 590 50 600 105 590 145 650 152 703 95 690 145 650 72 590 60 655 105 590 207 607 257 628 260 600 222 583 240 562 260 600 317 560 292 640 257 628 212 672 207 607 105 590 163 570 207 607M145 650L207 607 212 672 152 703 184 752 212 672 277 686 257 628 357 620 317 560 387 573 435 580M163 565L240 562M317 560L435 582M260 600L387 573 357 620 292 640 357 655 357 620 430 637 387 573M357 655L430 637 395 672 357 655 277 686 292 640M277 686L357 655 347 700 395 672 400 718 347 700 302 776 277 686 184 752 302 776 400 718 430 637M400 718L415 748 302 776 435 786M400 718L435 712M415 748L435 740 302 776 432 840 415 748M302 776L222 820 184 752 65 820 88 722 184 752 142 853M184 752L262 853 222 820 182 853M302 776L299 853M302 776L262 853M415 748L432 853M65 820L48 760 60 730 88 722 152 703M48 730L95 690 60 655 48 640M48 720L88 722 95 690 108 670 60 655M108 670L145 650M60 730L65 820 48 853M65 820L95 853M65 820L67 730M78 730L65 820 67 853M48 770L88 722M48 700L95 690M48 585L60 655 48 685M50 565L60 655 72 590M317 560L207 607M317 560L315 612M257 628L435 650M395 672L435 637M347 700L435 720M435 835L415 853"/>
            </g>
          </svg>

          <section class="float elem">
            <header class="caption idle"><svg class="ic"><use href="#torch"/></svg><h3>Element Selection</h3><span class="winbtns"><button aria-label="Minimize"><svg><use href="#min"/></svg></button><button aria-label="Maximize"><svg><use href="#max"/></svg></button><button class="x" aria-label="Close"><svg><use href="#close"/></svg></button></span></header>
            <div class="elem-body">
              <div class="frame"><button class="down" aria-label="Individual"><svg class="ic s12"><use href="#target"/></svg></button><button aria-label="Block"><svg class="ic s12"><use href="#smallrect"/></svg></button><button aria-label="Shape"><svg class="ic s12"><use href="#para"/></svg></button><button aria-label="Circle"><svg class="ic s12"><use href="#smallcircle"/></svg></button><button aria-label="Line"><svg class="ic s12"><use href="#diag"/></svg></button></div>
              <button class="side" aria-label="Disable handles"><svg class="ic"><use href="#stop"/></svg></button><i></i>
              <div class="frame"><button class="down" aria-label="New selection"><svg class="ic s12"><use href="#starhand"/></svg></button><button aria-label="Add"><svg class="ic s12"><use href="#plus"/></svg></button><button aria-label="Subtract"><svg class="ic s12"><use href="#minus"/></svg></button><button aria-label="Invert"><svg class="ic s12"><use href="#invert"/></svg></button><button aria-label="Select all"><svg class="ic s12"><use href="#people"/></svg></button></div>
              <button class="side" aria-label="Pick"><svg class="ic"><use href="#graypoint"/></svg></button><button class="more" aria-label="Show more"><i class="caret"></i></button>
            </div>
          </section>

          <section class="float geom">
            <header class="caption idle small"><h3>Geometry Gener...</h3><span class="winbtns"><button class="x" aria-label="Close"><svg><use href="#close"/></svg></button></span></header>
            <div class="geom-body"><button aria-label="Design standards"><svg class="ic"><use href="#scale"/></svg></button><button aria-label="Set standard"><svg class="ic"><use href="#sunscale"/></svg></button><button aria-label="Feature palette"><svg class="ic"><use href="#scalepal"/></svg></button><button aria-label="Set feature"><svg class="ic"><use href="#sunpal"/></svg></button><button aria-label="Complex geometry"><svg class="ic"><use href="#redchain"/></svg></button></div>
          </section>

          <section class="float design">
            <header class="caption"><svg class="ic"><use href="#photo"/></svg><h3>Design Standards Toolbar</h3><span class="winbtns"><button class="x" aria-label="Close"><svg><use href="#close"/></svg></button></span></header>
            <div class="design-body">
              <button aria-label="Set design standard"><svg class="ic"><use href="#sunscale"/></svg></button><button class="lit" aria-label="Toggle active standard"><svg class="ic"><use href="#setscale"/></svg></button>
              <i class="sep"></i><span class="combo"><select aria-label="Design standard"><option>ane\8%Super\55MPH</option></select></span>
              <i class="sep"></i><span class="combo"><select aria-label="Sight distance"><option>Stopping Sight Distan</option></select></span>
            </div>
          </section>

          <section class="float features">
            <header class="caption idle"><svg class="ic"><use href="#photo"/></svg><h3>Features Definition Toggle Bar</h3><span class="winbtns"><button class="x" aria-label="Close"><svg><use href="#close"/></svg></button></span></header>
            <div class="features-body">
              <button class="raised" aria-label="Set active feature"><svg class="ic"><use href="#palbulb"/></svg></button>
              <span class="combo"><select aria-label="Feature definition"><option>Geometry Scratch</option></select></span>
              <div class="group c19"><button aria-label="Match feature"><svg class="ic"><use href="#palpal"/></svg></button><button aria-label="Surface"><svg class="ic"><use href="#books"/></svg></button><button aria-label="Section"><svg class="ic"><use href="#section"/></svg></button><button aria-label="Chain commands"><svg class="ic"><use href="#chain"/></svg></button><button aria-label="Persist snaps"><svg class="ic"><use href="#lock"/></svg></button></div>
            </div>
            <svg class="mouse"><use href="#cursor"/></svg>
          </section>
        </div>
        <div class="vscroll"><button aria-label="Scroll up"><i class="tri up"></i></button><i class="track t1"></i><i class="thumb"></i><i class="track t2"></i><button aria-label="Scroll down"><i class="tri dn"></i></button></div>
      </div>
      <div class="hscroll"><button aria-label="Scroll left"><i class="tri lf"></i></button><i class="track t1"></i><i class="thumb"></i><i class="track t2"></i><button aria-label="Scroll right"><i class="tri rt"></i></button><i class="corner"></i></div>
    </section>
    <div class="messages"><button>Civil Message Center</button></div>
  </div>

  <nav class="tools" aria-label="Drawing tools">
    <div class="stack main-tools">
      <button aria-label="Select"><svg class="ic"><use href="#pointer"/></svg></button><button class="sub" aria-label="Fence"><svg class="ic"><use href="#fence"/></svg></button><button class="sub" aria-label="Points"><svg class="ic"><use href="#cross"/></svg></button><button class="sub" aria-label="Linear"><svg class="ic"><use href="#linebulb"/></svg></button><button class="sub" aria-label="Patterns"><svg class="ic"><use href="#pattern"/></svg></button><button class="sub" aria-label="Polygons"><svg class="ic"><use href="#rect"/></svg></button><button class="sub" aria-label="Arcs"><svg class="ic"><use href="#arc"/></svg></button><button class="sub" aria-label="Ellipses"><svg class="ic"><use href="#circle"/></svg></button><button class="sub" aria-label="Text"><svg class="ic"><use href="#texta"/></svg></button><button class="sub" aria-label="Groups"><svg class="ic"><use href="#spath"/></svg></button><button class="sub" aria-label="Cells"><svg class="ic"><use href="#star"/></svg></button><button class="sub" aria-label="Measure"><svg class="ic"><use href="#measure"/></svg></button><button class="sub" aria-label="Dimension"><svg class="ic"><use href="#dim"/></svg></button><button class="sub" aria-label="Change attributes"><svg class="ic s14"><use href="#palette"/></svg></button><button class="sub" aria-label="Manipulate"><svg class="ic"><use href="#move"/></svg></button><button class="sub" aria-label="Modify"><svg class="ic"><use href="#modify"/></svg></button><button class="sub" aria-label="Geographic"><svg class="ic"><use href="#world"/></svg></button><button aria-label="Delete"><svg class="ic"><use href="#delete"/></svg></button>
    </div>
    <i class="rule"></i>
    <div class="stack civil-tools">
      <button class="sub" aria-label="Survey"><svg class="ic"><use href="#survey"/></svg></button><button class="sub" aria-label="Profile"><svg class="ic"><use href="#profile"/></svg></button><button class="sub" aria-label="Construct"><svg class="ic"><use href="#hammer"/></svg></button><button class="sub" aria-label="Alignment"><svg class="ic s14"><use href="#angle"/></svg></button><button class="sub" aria-label="Terrain"><svg class="ic"><use href="#terrain"/></svg></button><button class="sub" aria-label="Corridor"><svg class="ic"><use href="#bridge"/></svg></button><button class="sub" aria-label="Visualize"><svg class="ic s12"><use href="#spark"/></svg></button><button class="sub" aria-label="Sheets"><svg class="ic"><use href="#sheet"/></svg></button>
    </div>
  </nav>
</main>

<div class="snapbar" role="toolbar" aria-label="Snap modes">
  <i class="grip"></i>
  <button class="down b18" aria-label="AccuSnap"><svg class="ic s14"><use href="#yellowx"/></svg></button><i class="sep"></i>
  <div class="even snaps">
    <button aria-label="Nearest"><svg class="ic s12"><use href="#near"/></svg></button><button class="down" aria-label="Keypoint"><svg class="ic"><use href="#dotgrid"/></svg></button><button aria-label="Midpoint"><svg class="ic s12"><use href="#mid"/></svg></button><button aria-label="Center"><svg class="ic s14"><use href="#center"/></svg></button><button aria-label="Origin"><svg class="ic s14"><use href="#origin"/></svg></button><button aria-label="Bisector"><svg class="ic s14"><use href="#bisect"/></svg></button><button aria-label="Intersection"><svg class="ic s14"><use href="#intersect"/></svg></button><button aria-label="Tangent"><svg class="ic s14"><use href="#tangent"/></svg></button><button aria-label="Tangent from"><svg class="ic s14"><use href="#tangent"/></svg></button><button aria-label="Perpendicular"><svg class="ic s14"><use href="#perp"/></svg></button><button aria-label="Perpendicular from"><svg class="ic s14"><use href="#perp"/></svg></button><button aria-label="Multi-snap"><svg class="ic s14"><use href="#box"/></svg></button>
  </div>
  <i class="sep wide"></i>
  <div class="group c19"><button aria-label="Cell"><svg class="ic s14"><use href="#violet"/></svg></button><button class="sub" aria-label="Accept"><svg class="ic s14"><use href="#check"/></svg></button></div>
  <i class="sep"></i>
  <div class="even accudraw">
    <button class="down" aria-label="Grid snap"><svg class="ic s14"><use href="#redgrid"/></svg></button><button aria-label="Axes"><svg class="ic s12"><use href="#axes"/></svg></button><button aria-label="Circle radius"><svg class="ic"><use href="#bluecircle"/></svg></button><button aria-label="Arc radius"><svg class="ic s14"><use href="#smallarc"/></svg></button><button aria-label="Two circles"><svg class="ic"><use href="#twocircles"/></svg></button><button aria-label="Curve"><svg class="ic s14"><use href="#greencurve"/></svg></button><button aria-label="Annotated curve"><svg class="ic s14"><use href="#notecurve"/></svg></button><button aria-label="Angle"><svg class="ic s14"><use href="#redangle"/></svg></button><button aria-label="Knot"><svg class="ic s14"><use href="#knot"/></svg></button>
  </div>
  <i class="sep wide"></i>
  <div class="group drops faded"><button aria-label="Previous"><svg class="ic s14"><use href="#back"/></svg><i class="caret"></i></button><button aria-label="Next"><svg class="ic s14"><use href="#forward"/></svg><i class="caret"></i></button><button aria-label="View set"><svg class="ic s14"><use href="#seat"/></svg><i class="caret"></i></button></div>
  <span class="combo model-combo"><svg class="ic s12"><use href="#models"/></svg><select aria-label="View group"><option>Default</option></select></span>
  <i class="sep"></i>
  <div class="group c22"><button aria-label="Manage view groups"><svg class="ic s14"><use href="#models"/></svg></button></div>
  <div class="views"><button class="on">1</button><button>2</button><button>3</button><button>4</button><button>5</button><button>6</button><button>7</button><button>8</button></div>
</div>

<div class="status" role="status">
  <span class="cell prompt">Element Selection &gt; Identify element to add to set</span>
  <span class="cell w24"></span><span class="cell grow"></span>
  <span class="cell w24"><svg class="ic"><use href="#snap"/></svg></span>
  <span class="cell w24"><svg class="ic s12"><use href="#smalllock"/></svg></span>
  <span class="cell w90"></span>
  <span class="cell coords">1610.7196, 3630.9005</span>
  <span class="cell w24"></span>
  <span class="cell w24"><svg class="ic s12"><use href="#none"/></svg></span>
</div>

<footer class="taskbar">
  <button class="start"><svg class="ic"><use href="#flag"/></svg>Start</button>
  <div class="group quick"><button aria-label="Internet Explorer"><svg class="ic s14"><use href="#ie"/></svg></button><button aria-label="Explorer"><svg class="ic s14"><use href="#folder"/></svg></button><button aria-label="Media Player"><svg class="ic s14"><use href="#media"/></svg></button><button aria-label="Snipping Tool"><svg class="ic s14"><use href="#snip"/></svg></button></div>
  <div class="running"><button aria-label="ProjectWise"><svg class="ic"><use href="#logo"/></svg></button><button class="on" aria-label="Power GEOPAK"><svg class="ic s14"><use href="#photo"/></svg></button><button aria-label="Recorder"><svg class="ic s14"><use href="#camcorder"/></svg></button></div>
  <div class="tray">
    <button aria-label="Show hidden icons"><svg class="ic s12" viewBox="0 0 12 12"><path fill="none" stroke="#222" d="M4 5l2-2 2 2M4 9l2-2 2 2"/></svg></button>
    <svg class="ic s14"><use href="#action"/></svg><svg class="ic s14"><use href="#battery"/></svg><svg class="ic s14"><use href="#network"/></svg><svg class="ic s14"><use href="#volume"/></svg>
    <time>9:20 AM</time><svg class="ic s14"><use href="#desktop"/></svg>
  </div>
</footer>
</body>
</html>
```

FILE: styles.css
```css
* { box-sizing: border-box; }
:root { --face: #d4d0c8; --cream: #f5f1e7; --ui: "Liberation Sans", Arial, sans-serif; --cap: "Open Sans", "Noto Sans", sans-serif; --side: "DejaVu Sans Condensed", "DejaVu Sans", sans-serif; }
body { margin: 0; min-height: 100vh; display: flex; flex-direction: column; background: var(--face); color: #1c1c1c; font: 10px/12px var(--ui); overflow: hidden; }
button, select { font: inherit; color: inherit; }
button { display: flex; align-items: center; justify-content: center; padding: 0; border: 0; background: none; }
h1, h2, h3 { margin: 0; font: bold 10px/13px var(--cap); white-space: nowrap; }
i { display: block; flex: none; }
.defs { display: none; }
.ic { display: block; flex: none; width: 16px; height: 16px; }
.s14 { width: 14px; height: 14px; }
.s12 { width: 12px; height: 12px; }
.group, .even { display: flex; align-items: center; flex: none; }
.even > button { flex: 1; height: 20px; }
.c18 > button { width: 18px; height: 18px; }
.c19 > button { width: 19px; height: 19px; }
.c22 > button { width: 22px; height: 19px; }
.drops > button { width: 30px; }
.drops .ic { margin: 0 1px; }
.caret { width: 12px; height: 3px; background: #111; clip-path: polygon(4px 0, 10px 0, 7px 100%); }
.sep, .grip { width: 2px; align-self: stretch; border-left: 1px solid #97938b; border-right: 1px solid #fff; }
.down { border: 1px solid; border-color: #6c6962 #fff #fff #6c6962; background: #dedbd4; }
.sub { position: relative; }
.sub::after { content: ""; position: absolute; right: 1px; bottom: 1px; border: 2px solid transparent; border-right-color: #222; border-left: 0; }

.caption { display: flex; align-items: center; flex: none; height: 15px; color: #fff; background: linear-gradient(90deg, #0a246a, #a6caf0); }
.caption.idle { color: #dbd8d1; background: linear-gradient(90deg, #808080, #c0c0c0); }
.caption .winbtns { display: flex; margin-left: auto; padding-right: 2px; }
.winbtns button { width: 13px; height: 12px; border: 1px solid; border-color: #fff #404040 #404040 #fff; background: var(--face); color: #000; }
.winbtns .x { margin-left: 2px; }
.winbtns svg { width: 12px; height: 12px; flex: none; }
.main-caption .ic { margin-right: 1px; height: 14px; }
.main-caption h1 { flex: 1; overflow: hidden; }

.menubar { display: flex; align-items: center; gap: 9px; flex: none; height: 23px; padding-left: 1px; }
.menubar .grip { height: 16px; align-self: center; }
.toolbar { display: flex; align-items: center; flex: none; height: 19px; padding-left: 1px; }
.level-combo { width: 112px; margin: 0 5px 0 2px; }
.attrs { display: flex; margin-right: 3px; }
.attr { display: grid; grid-template-columns: 20px 17px 17px; width: 54px; }
.attr + .attr { border-left: 1px solid #aaa69d; }
.toolbar .wide { margin: 0 2px 0 4px; }
.scale-combo { width: 98px; margin-left: 3px; }
.scale-combo select { padding-left: 2px; }

.combo { position: relative; display: flex; align-items: center; height: 16px; border: 1px solid; border-color: #6c6962 #fff #fff #6c6962; background: #fff; min-width: 0; }
.combo select { appearance: none; flex: 1; min-width: 0; height: 100%; padding: 0 12px 0 1px; border: 0; border-radius: 0; background: none; outline: 0; overflow: hidden; }
.combo::after { content: ""; position: absolute; right: 0; top: 0; bottom: 0; width: 12px; border: 1px solid; border-color: #fff #404040 #404040 #fff; background: var(--face); pointer-events: none; }
.combo::before { content: ""; position: absolute; z-index: 1; right: 3px; top: 6px; width: 6px; height: 3px; background: #111; clip-path: polygon(0 0, 100% 0, 50% 100%); pointer-events: none; }
.combo.navy { color: #fff; background: #0a246a; }

.middle { display: flex; flex: 1; min-height: 0; margin-top: 2px; border-top: 2px solid #efede8; }
.work { flex: 1; min-width: 0; display: grid; grid-template: minmax(0, 1fr) 16px / 16px minmax(0, 1fr); }
.dock { display: flex; flex-direction: column; align-items: center; gap: 2px; padding-top: 3px; background: var(--cream); }
.dock button { writing-mode: vertical-rl; font: 9px/12px var(--side); }
.dock .bar { width: 10px; height: 1px; margin: 5px 0 6px; background: #333; }
.view { display: flex; flex-direction: column; min-height: 0; }
.view-caption { padding-left: 2px; }
.view-caption .winbtns { padding-right: 1px; }
.viewicon { width: 14px; height: 14px; margin-right: 1px; }
.viewbar { display: flex; align-items: center; flex: none; height: 17px; }
.viewbar button { width: 15px; height: 15px; }
.viewbar .sep { height: 15px; align-self: center; }
.canvas-row { display: flex; flex: 1; min-height: 0; }
.canvas { position: relative; flex: 1; min-width: 0; background: #000; overflow: hidden; }
.drawing { display: block; width: 100%; height: 100%; }
.headline { font: bold 101px "Liberation Serif", serif; fill: #00ff40; }
.note { font: bold 23px "Liberation Serif", serif; fill: #e9e834; }
.cells { fill: #a53a2e; shape-rendering: crispEdges; }
.tin { stroke: #18a01e; stroke-width: 4px; }

.vscroll { display: flex; flex-direction: column; width: 13px; flex: none; }
.hscroll { display: flex; height: 13px; flex: none; }
.track { background: #b6b2aa; }
.thumb, .vscroll button, .hscroll button { border: 1px solid; border-color: #fff #404040 #404040 #fff; background: var(--face); flex: none; }
.vscroll button, .hscroll button { width: 13px; height: 13px; }
.vscroll .t1 { flex: 237; }
.vscroll .t2 { flex: 238; }
.vscroll .thumb { height: 30px; }
.hscroll .t1 { flex: 566; }
.hscroll .t2 { flex: 567; }
.hscroll .thumb { width: 72px; }
.corner { width: 13px; }
.tri { width: 5px; height: 5px; background: #000; }
.up { clip-path: polygon(0 80%, 50% 20%, 100% 80%); }
.dn { clip-path: polygon(0 20%, 100% 20%, 50% 80%); }
.lf { clip-path: polygon(80% 0, 80% 100%, 20% 50%); }
.rt { clip-path: polygon(20% 0, 20% 100%, 80% 50%); }
.messages { grid-column: 1 / -1; display: flex; align-items: center; padding-left: 9px; background: var(--cream); font: 9px/12px var(--side); }
.messages button { padding-right: 5px; border-right: 1px solid #333; }

.tools { width: 22px; flex: none; }
.stack { display: flex; flex-direction: column; }
.stack button { flex: 1; width: 22px; }
.main-tools { height: 338px; padding-top: 1px; }
.rule { height: 2px; margin: 5px 0; border-top: 1px solid #97938b; border-bottom: 1px solid #fff; }
.civil-tools { height: 145px; }

.float { position: absolute; padding: 2px; border: 1px solid; border-color: #efede8 #77746d #77746d #efede8; background: var(--face); font-size: 9px; }
.float .caption { height: 15px; }
.float .caption .ic { height: 14px; margin-right: 1px; }
.elem { left: 36px; top: 48px; width: 175px; }
.elem-body { display: grid; grid-template-columns: 75px 1fr 26px; gap: 5px 0; padding: 6px 0 8px 10px; align-items: center; }
.elem-body > button { height: 18px; }
.elem-body .side { padding-left: 26px; }
.elem-body .more { align-self: end; height: 8px; }
.elem .winbtns button { width: 15px; height: 13px; }
.frame { display: flex; height: 18px; border: 1px solid; border-color: #8b8880 #fff #fff #8b8880; }
.frame button { flex: 1; }
.geom { left: 285px; top: 60px; width: 103px; }
.geom .caption { height: 14px; }
.geom h3 { font-size: 9px; padding-left: 1px; }
.geom .winbtns { padding: 0; }
.geom .winbtns button { width: 11px; height: 11px; margin: 0; }
.geom-body { display: flex; justify-content: space-between; padding: 3px; }
.design { left: 406px; top: 11px; width: 264px; }
.design-body { display: flex; align-items: center; height: 28px; padding: 0 5px 0 2px; gap: 1px; }
.design-body .sep { height: 20px; align-self: center; }
.design-body .combo { flex: 1; }
.design-body button { height: 19px; width: 19px; }
.design-body .lit { border: 1px solid #44598f; background: #aab5dc; }
.features { left: 734px; top: 34px; width: 377px; }
.features-body { display: flex; align-items: center; height: 28px; padding: 0 5px 0 2px; }
.features-body .raised { width: 19px; height: 19px; border: 1px solid; border-color: #fff #8b8880 #8b8880 #fff; }
.features-body .combo { flex: 1; margin-right: 1px; }
.mouse { position: absolute; left: 12px; top: 32px; width: 13px; height: 16px; }
.float .winbtns { padding-right: 1px; }
.float .winbtns .x { width: 14px; height: 13px; }

.snapbar { display: flex; align-items: center; flex: none; height: 23px; padding-left: 2px; }
.snapbar > .sep, .snapbar > .grip { height: 20px; align-self: center; }
.b18 { width: 20px; height: 20px; margin: 0 2px 0 1px; }
.snaps { width: 226px; margin-left: 1px; }
.snapbar .wide { margin: 0 2px; }
.accudraw { width: 168px; }
.faded .caret { opacity: .6; }
.model-combo { width: 112px; margin-right: 3px; }
.model-combo select { padding-left: 3px; }
.views { display: flex; border-left: 1px solid #8b8880; }
.views button { width: 12px; height: 16px; border: 1px solid; border-color: #fff #404040 #8b8880 #fff; }
.views .on { color: #fff; background: #0a246a; }

.status { display: flex; flex: none; gap: 2px; height: 23px; padding-top: 1px; border-top: 1px solid #8b8880; border-bottom: 1px solid #fff; }
.cell { display: flex; align-items: center; justify-content: center; flex: none; border: 1px solid; border-color: #97938b #fff #fff #97938b; }
.prompt { width: 262px; justify-content: flex-start; padding-left: 2px; font-size: 9px; }
.w24 { width: 22px; }
.w90 { width: 89px; }
.coords { width: 144px; justify-content: flex-start; padding-left: 1px; }
.grow { flex: 1; border-color: transparent #97938b transparent transparent; }

.taskbar { display: flex; align-items: center; flex: none; height: 21px; padding: 0 2px; }
.start, .running button { height: 19px; border: 1px solid; border-color: #fff #404040 #404040 #fff; }
.start { width: 41px; font: bold 10px/12px var(--cap); }
.start .ic { width: 13px; height: 13px; margin-right: 1px; }
.quick { margin-left: 5px; }
.quick button { width: 25px; }
.running { display: flex; gap: 2px; }
.running button { width: 24px; }
.running .on { border-color: #404040 #fff #fff #404040; background: #ebe9e4; }
.tray { display: flex; align-items: center; justify-content: space-between; width: 164px; height: 18px; margin-left: auto; padding: 0 2px; border: 1px solid; border-color: #8b8880 #fff #fff #8b8880; }
.tray time { font-size: 9px; }
```
